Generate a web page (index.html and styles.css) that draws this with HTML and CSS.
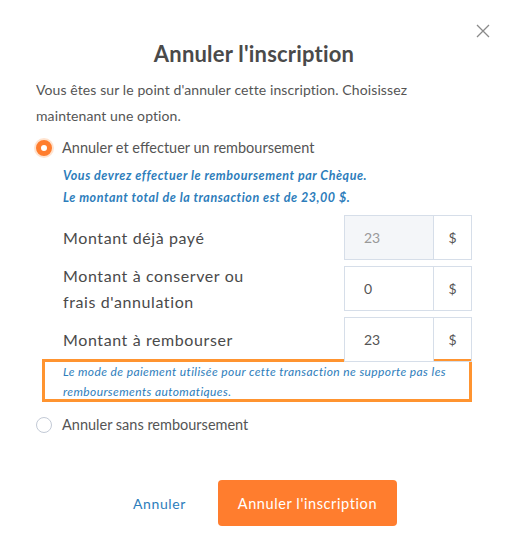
FILE: index.html
```html
<!DOCTYPE html>
<html lang="fr">
<head>
    <meta charset="UTF-8">
    <title>Annuler l'inscription</title>
    <link rel="stylesheet" href="styles.css">
</head>
<body>

<div class="modal">
    <button class="closeBtn" aria-label="Fermer">
        <svg width="14" height="14" viewBox="0 0 14 14"><path d="M1 1L13 13M13 1L1 13" stroke="#8a8a8a" stroke-width="1.3" fill="none"/></svg>
    </button>
    <h2 class="title">Annuler l'inscription</h2>
    <p class="intro">Vous êtes sur le point d'annuler cette inscription. Choisissez maintenant une option.</p>

    <label class="option">
        <span class="radio checked"></span>
        <span>Annuler et effectuer un remboursement</span>
    </label>
    <div class="refund">
        <p class="notice">Vous devrez effectuer le remboursement par Chèque.<br>Le montant total de la transaction est de 23,00 $.</p>

        <div class="row">
            <span class="label">Montant déjà payé</span>
            <div class="field">
                <input class="amount" value="23" disabled>
                <span class="unit">$</span>
            </div>
        </div>
        <div class="row">
            <span class="label">Montant à conserver ou<br>frais d'annulation</span>
            <div class="field">
                <input class="amount" value="0">
                <span class="unit">$</span>
            </div>
        </div>
        <div class="row">
            <span class="label">Montant à rembourser</span>
            <div class="field">
                <input class="amount" value="23">
                <span class="unit">$</span>
            </div>
        </div>
    </div>
    <div class="warning">
        <p>Le mode de paiement utilisée pour cette transaction ne supporte pas les remboursements automatiques.</p>
    </div>

    <label class="option">
        <span class="radio"></span>
        <span>Annuler sans remboursement</span>
    </label>

    <div class="actions">
        <button class="linkBtn">Annuler</button>
        <button class="mainBtn">Annuler l'inscription</button>
    </div>
</div>

</body>
</html>
```

FILE: styles.css
```css
body {
    font-family: Lato, "Open Sans", sans-serif;
    margin: 0;
    background-color: #fff;
    color: #555;
}
.modal {
    position: relative;
    padding: 40px 34px 12px 36px;
}
.closeBtn {
    position: absolute;
    top: 24px;
    right: 16px;
    background: none;
    border: none;
    padding: 0;
    cursor: pointer;
}
.title {
    margin: 0 0 10px;
    text-align: center;
    font-size: 22px;
    font-weight: 700;
    color: #4a4a4a;
    letter-spacing: 0.2px;
}
.intro {
    margin: 0 0 6px;
    font-size: 14px;
    line-height: 26px;
    color: #555;
    letter-spacing: 0.1px;
}
.option {
    display: flex;
    align-items: center;
    gap: 10px;
    font-size: 14.5px;
    line-height: 26px;
    color: #555;
}
.radio {
    width: 16px;
    height: 16px;
    border-radius: 50%;
    border: 1px solid #c3cad6;
    box-sizing: border-box;
    background: #fff;
}
.radio.checked {
    border: 5px solid #ff7d2e;
    box-shadow: 0 0 0 2px #ffe3cf;
}
.refund {
    padding-left: 27px;
}
.notice {
    margin: 4px 0 6px;
    font-size: 12.5px;
    line-height: 22px;
    font-weight: 700;
    font-style: italic;
    color: #2d7dbb;
    letter-spacing: 0.55px;
}
.row {
    display: flex;
    align-items: center;
    justify-content: space-between;
    height: 45px;
    margin-bottom: 6px;
}
.row:last-child {
    margin-bottom: 0;
}
.label {
    font-size: 16px;
    line-height: 26px;
    color: #4a4a4a;
    letter-spacing: 0.6px;
}
.field {
    display: flex;
    height: 45px;
    border: 1px solid #d6dee9;
    box-sizing: border-box;
}
.amount {
    width: 89px;
    border: none;
    border-right: 1px solid #d6dee9;
    padding: 0 0 0 19px;
    box-sizing: border-box;
    font: inherit;
    font-size: 14px;
    color: #555;
    background: #fff;
}
.amount:disabled {
    background: #f4f6f9;
    color: #999;
}
.unit {
    width: 37px;
    display: flex;
    align-items: center;
    justify-content: center;
    font-size: 14px;
    color: #555;
}
.warning {
    margin: -3px 0 10px 6px;
    border: 3px solid #ff9430;
    padding: 0 0 0 18px;
    height: 37px;
}
.warning p {
    margin: 0;
    font-size: 12px;
    line-height: 20px;
    font-style: italic;
    color: #2d7dbb;
    letter-spacing: 0.4px;
}
.actions {
    display: flex;
    justify-content: center;
    align-items: center;
    gap: 32px;
    margin-top: 42px;
    padding-left: 22px;
}
.linkBtn {
    background: none;
    border: none;
    padding: 0;
    font: inherit;
    font-size: 14px;
    color: #2d7dbb;
    letter-spacing: 0.6px;
    cursor: pointer;
}
.mainBtn {
    width: 179px;
    height: 46px;
    background-color: #ff7d2e;
    color: #fff;
    border: none;
    border-radius: 4px;
    font: inherit;
    font-size: 14.5px;
    letter-spacing: 0.6px;
    cursor: pointer;
}
```
